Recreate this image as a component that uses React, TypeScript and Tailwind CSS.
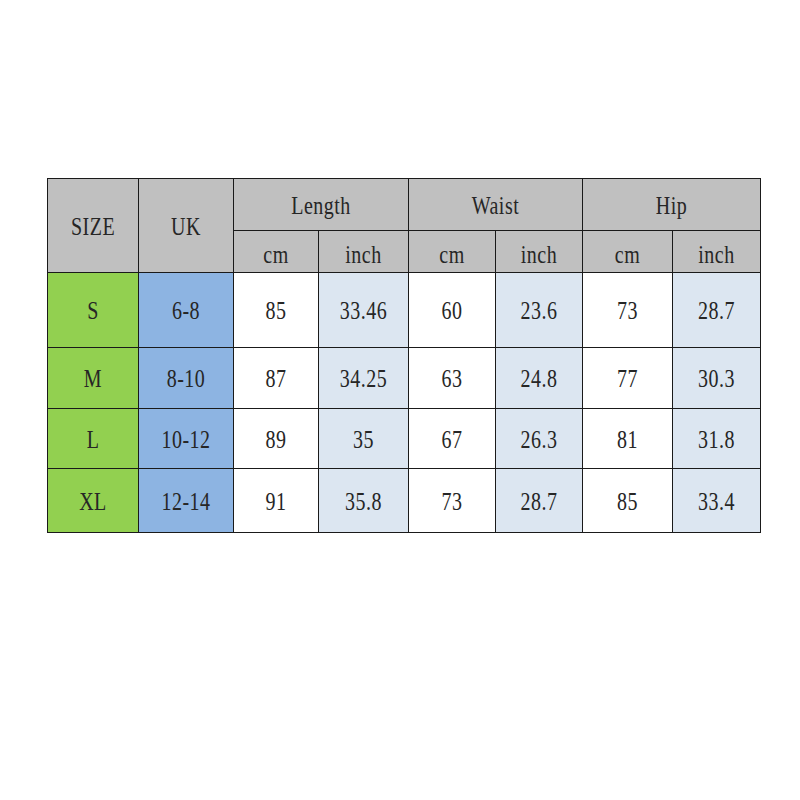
const rows = [
  { size: "S", uk: "6-8", vals: ["85", "33.46", "60", "23.6", "73", "28.7"] },
  { size: "M", uk: "8-10", vals: ["87", "34.25", "63", "24.8", "77", "30.3"] },
  { size: "L", uk: "10-12", vals: ["89", "35", "67", "26.3", "81", "31.8"] },
  { size: "XL", uk: "12-14", vals: ["91", "35.8", "73", "28.7", "85", "33.4"] },
];

const rowHeights = ["h-[74px]", "h-[60px]", "h-[59px]", "h-[63px]"];

function Cell({ className = "", children }: { className?: string; children?: React.ReactNode }) {
  return (
    <div className={`flex items-center justify-center ${className}`}>
      {/* tall narrow glyphs like the original SimSun text */}
      <span className="inline-block scale-y-[1.22] tracking-[0.5px]">{children}</span>
    </div>
  );
}

export default function App() {
  return (
    <div
      className="w-[800px] h-[800px] bg-white pt-[178px] pl-[47px] text-[20px] text-[#262626]"
      style={{ fontFamily: '"Liberation Serif", "Noto Sans CJK SC", serif' }}
    >
      <div className="inline-grid grid-cols-[90px_94px_84px_89px_86px_86px_89px_87px] grid-rows-[51px_41px] gap-px p-px bg-[#1a1a1a]">
        <Cell className="row-span-2 bg-[#c0c0c0]">SIZE</Cell>
        <Cell className="row-span-2 bg-[#c0c0c0]">UK</Cell>
        <Cell className="col-span-2 bg-[#c0c0c0]">Length</Cell>
        <Cell className="col-span-2 bg-[#c0c0c0]">Waist</Cell>
        <Cell className="col-span-2 bg-[#c0c0c0]">Hip</Cell>
        {["cm", "inch", "cm", "inch", "cm", "inch"].map((u, i) => (
          <Cell key={i} className="bg-[#c0c0c0] pt-1">{u}</Cell>
        ))}
        {rows.map((r, ri) => (
          <div key={r.size} className="contents">
            <Cell className={`${rowHeights[ri]} bg-[#92d050]`}>{r.size}</Cell>
            <Cell className={`${rowHeights[ri]} bg-[#8db4e2]`}>{r.uk}</Cell>
            {r.vals.map((v, i) => (
              <Cell key={i} className={`${rowHeights[ri]} ${i % 2 ? "bg-[#dce6f1]" : "bg-white"}`}>
                {v}
              </Cell>
            ))}
          </div>
        ))}
      </div>
    </div>
  );
}
